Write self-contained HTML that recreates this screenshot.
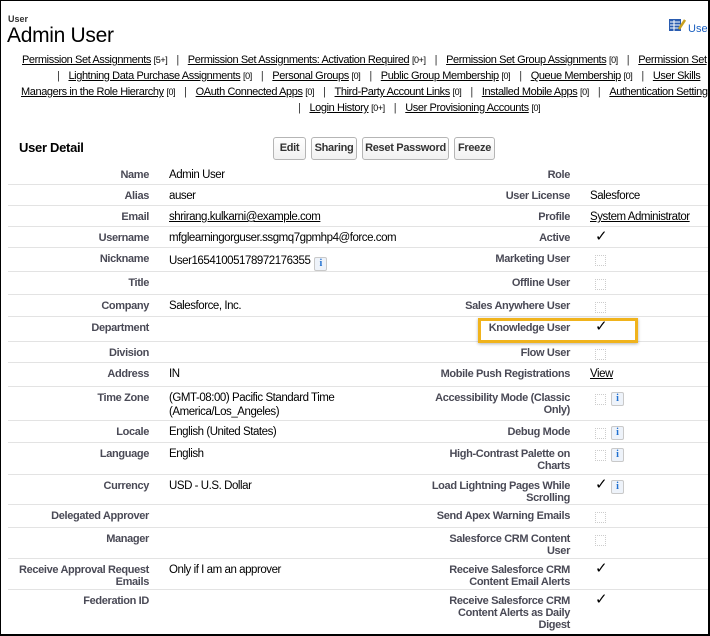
<!DOCTYPE html>
<html><head><meta charset="utf-8"><style>
*{margin:0;padding:0;box-sizing:border-box}
html,body{width:710px;height:636px;overflow:hidden;background:#fff}
body{font-family:"Liberation Sans",Arial,sans-serif;color:#000;position:relative}
.frame{position:absolute;left:0;top:0;width:710px;height:636px;border:1.5px solid #000;border-right-width:2px;border-bottom-width:2px;pointer-events:none;z-index:5}
.a{position:absolute;white-space:nowrap}
.links{position:absolute;left:0;font-size:11px;color:#000;white-space:nowrap;letter-spacing:-0.4px}
.links u{color:#000}
.links s{text-decoration:none;font-size:9px}
.sep{color:#333;margin:0 9px}
.btn{position:absolute;top:137px;height:23px;border:1px solid #b5b5b5;border-radius:3px;background:linear-gradient(#fff,#f1f1f1);font-size:11px;font-weight:bold;color:#333;line-height:21px;text-align:center;letter-spacing:-0.3px}
.row{position:absolute;left:8px;width:702px;border-bottom:1px solid #e3e3e3}
.l{position:absolute;right:561px;top:5px;font-size:11px;font-weight:bold;color:#4a4a56;text-align:right;line-height:12px;letter-spacing:-0.35px;white-space:nowrap}
.v{position:absolute;left:161px;top:4px;font-size:11.5px;line-height:14px;letter-spacing:-0.45px;white-space:nowrap}
.rl{position:absolute;right:140px;top:5px;font-size:11px;font-weight:bold;color:#4a4a56;text-align:right;line-height:12px;white-space:nowrap;letter-spacing:-0.35px}
.rv{position:absolute;left:582px;top:4px;font-size:11.5px;line-height:14px;letter-spacing:-0.45px}
.cb{position:absolute;left:587px;top:7px;width:11px;height:11px;border:1px dotted #ccc}
.ck{position:absolute;left:587px;top:2px;font-size:15px;line-height:15px}
.i{position:absolute;left:603px;top:5px;width:13px;height:14px;border:1px solid #c9c9c9;border-radius:2px;background:#eef3fa;color:#1f6fd0;font:bold 10px "Liberation Serif",serif;text-align:center;line-height:12px;letter-spacing:0}
.ii{position:static;display:inline-block;vertical-align:-2px;margin-left:4px}
</style></head><body>
<div class="frame"></div>
<div class="a" style="left:8px;top:14px;font-size:9px;font-weight:bold;color:#333">User</div>
<div class="a" style="left:7px;top:24px;font-size:21px;color:#000;letter-spacing:-0.3px">Admin User</div>
<svg class="a" style="left:668px;top:17px" width="18" height="16" viewBox="0 0 18 16"><rect x="1" y="2" width="12" height="12" fill="#2a5cb0"/><path d="M2 5h10M2 8h10M2 11h10M6 3v11" stroke="#fff" stroke-width="1"/><path d="M11 12l6-9" stroke="#c8a020" stroke-width="2.5"/></svg>
<div class="a" style="left:688px;top:23px;font-size:11px;color:#1a5fc0">User</div>

<div class="links" style="top:54px;left:22px"><u>Permission Set Assignments</u> <s>[5+]</s><span class="sep">|</span><u>Permission Set Assignments: Activation Required</u> <s>[0+]</s><span class="sep">|</span><u>Permission Set Group Assignments</u> <s>[0]</s><span class="sep">|</span><u>Permission Set</u></div>
<div class="links" style="top:70px;left:57px"><span class="sep" style="margin-left:0">|</span><u>Lightning Data Purchase Assignments</u> <s>[0]</s><span class="sep">|</span><u>Personal Groups</u> <s>[0]</s><span class="sep">|</span><u>Public Group Membership</u> <s>[0]</s><span class="sep">|</span><u>Queue Membership</u> <s>[0]</s><span class="sep">|</span><u>User Skills</u></div>
<div class="links" style="top:86px;left:21px"><u>Managers in the Role Hierarchy</u> <s>[0]</s><span class="sep">|</span><u>OAuth Connected Apps</u> <s>[0]</s><span class="sep">|</span><u>Third-Party Account Links</u> <s>[0]</s><span class="sep">|</span><u>Installed Mobile Apps</u> <s>[0]</s><span class="sep">|</span><u>Authentication Settings</u></div>
<div class="links" style="top:102px;left:298px"><span class="sep" style="margin-left:0">|</span><u>Login History</u> <s>[0+]</s><span class="sep">|</span><u>User Provisioning Accounts</u> <s>[0]</s></div>

<div class="a" style="left:19px;top:140px;font-size:13px;font-weight:bold;letter-spacing:-0.3px">User Detail</div>
<div class="btn" style="left:273px;width:33px">Edit</div>
<div class="btn" style="left:311px;width:46px">Sharing</div>
<div class="btn" style="left:362px;width:87px">Reset Password</div>
<div class="btn" style="left:454px;width:41px">Freeze</div>

<div class="row" style="top:164px;height:21px"><div class="l">Name</div><div class="v">Admin User</div><div class="rl">Role</div></div>
<div class="row" style="top:185px;height:21px"><div class="l">Alias</div><div class="v">auser</div><div class="rl">User License</div><div class="rv">Salesforce</div></div>
<div class="row" style="top:206px;height:21px"><div class="l">Email</div><div class="v"><u>shrirang.kulkarni@example.com</u></div><div class="rl">Profile</div><div class="rv"><u>System Administrator</u></div></div>
<div class="row" style="top:227px;height:21px"><div class="l">Username</div><div class="v">mfglearningorguser.ssgmq7gpmhp4@force.com</div><div class="rl">Active</div><div class="ck">✓</div></div>
<div class="row" style="top:248px;height:24px"><div class="l">Nickname</div><div class="v" style="top:6px">User16541005178972176355<span class="i ii">i</span></div><div class="rl">Marketing User</div><div class="cb"></div></div>
<div class="row" style="top:272px;height:23px"><div class="l">Title</div><div class="rl">Offline User</div><div class="cb"></div></div>
<div class="row" style="top:295px;height:22px"><div class="l">Company</div><div class="v">Salesforce, Inc.</div><div class="rl">Sales Anywhere User</div><div class="cb"></div></div>
<div class="row" style="top:317px;height:25px"><div class="l">Department</div><div class="rl">Knowledge User</div><div class="ck">✓</div></div>
<div class="a" style="left:478px;top:318px;width:160px;height:25px;border:3px solid #f0b31c;box-shadow:0 1px 3px rgba(0,0,0,.3)"></div>
<div class="row" style="top:342px;height:21px"><div class="l">Division</div><div class="rl">Flow User</div><div class="cb"></div></div>
<div class="row" style="top:363px;height:24px"><div class="l">Address</div><div class="v">IN</div><div class="rl">Mobile Push Registrations</div><div class="rv"><u>View</u></div></div>
<div class="row" style="top:387px;height:34px"><div class="l">Time Zone</div><div class="v">(GMT-08:00) Pacific Standard Time<br>(America/Los_Angeles)</div><div class="rl">Accessibility Mode (Classic<br>Only)</div><div class="cb"></div><div class="i">i</div></div>
<div class="row" style="top:421px;height:22px"><div class="l">Locale</div><div class="v">English (United States)</div><div class="rl">Debug Mode</div><div class="cb"></div><div class="i">i</div></div>
<div class="row" style="top:443px;height:32px"><div class="l">Language</div><div class="v">English</div><div class="rl">High-Contrast Palette on<br>Charts</div><div class="cb"></div><div class="i">i</div></div>
<div class="row" style="top:475px;height:30px"><div class="l">Currency</div><div class="v">USD - U.S. Dollar</div><div class="rl">Load Lightning Pages While<br>Scrolling</div><div class="ck">✓</div><div class="i">i</div></div>
<div class="row" style="top:505px;height:23px"><div class="l">Delegated Approver</div><div class="rl">Send Apex Warning Emails</div><div class="cb"></div></div>
<div class="row" style="top:528px;height:31px"><div class="l">Manager</div><div class="rl">Salesforce CRM Content<br>User</div><div class="cb"></div></div>
<div class="row" style="top:559px;height:31px"><div class="l">Receive Approval Request<br>Emails</div><div class="v">Only if I am an approver</div><div class="rl">Receive Salesforce CRM<br>Content Email Alerts</div><div class="ck">✓</div></div>
<div class="row" style="top:590px;height:44px;border:none"><div class="l">Federation ID</div><div class="rl">Receive Salesforce CRM<br>Content Alerts as Daily<br>Digest</div><div class="ck">✓</div></div>
</body></html>
